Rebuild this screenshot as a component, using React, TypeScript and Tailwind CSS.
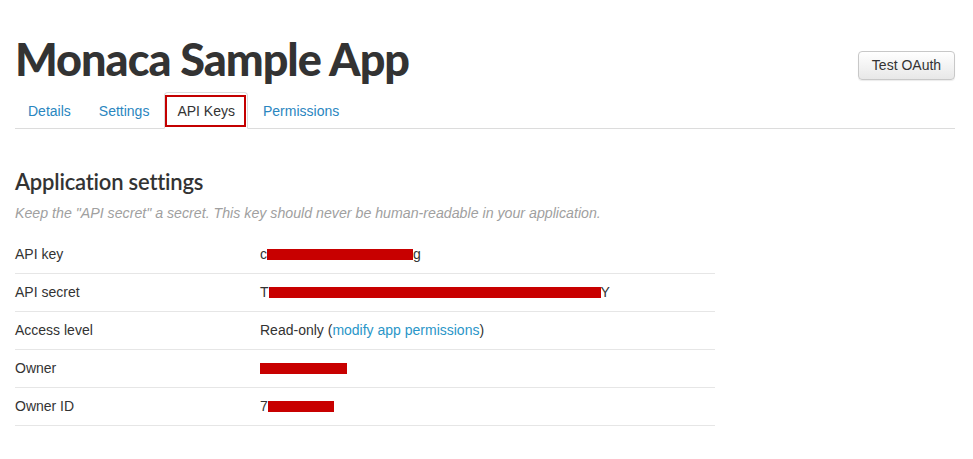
import React from "react";

const Bar = ({ w }: { w: number }) => (
  <span
    className="inline-block h-[11px] bg-[#c80000] align-middle"
    style={{ width: w }}
  />
);

export default function App() {
  const rows: { label: string; value: React.ReactNode }[] = [
    {
      label: "API key",
      value: (
        <span className="flex items-center">
          <span>c</span>
          <Bar w={146} />
          <span>g</span>
        </span>
      ),
    },
    {
      label: "API secret",
      value: (
        <span className="flex items-center">
          <span>T</span>
          <Bar w={332} />
          <span>Y</span>
        </span>
      ),
    },
    {
      label: "Access level",
      value: (
        <span>
          Read-only (<span className="text-[#2a96c8]">modify app permissions</span>)
        </span>
      ),
    },
    {
      label: "Owner",
      value: (
        <span className="flex items-center">
          <Bar w={87} />
        </span>
      ),
    },
    {
      label: "Owner ID",
      value: (
        <span className="flex items-center">
          <span>7</span>
          <Bar w={66} />
        </span>
      ),
    },
  ];

  return (
    <div
      className="w-[973px] h-[459px] bg-white text-[#333] overflow-hidden"
      style={{ fontFamily: '"Liberation Sans", Arial, sans-serif' }}
    >
      <div className="px-[15px] pr-[18px]">
        <div className="flex items-start justify-between pt-[31px]">
          <h1
            className="text-[45px] leading-[56px] font-black tracking-[-1px] text-[#333]"
            style={{ fontFamily: "Lato, sans-serif" }}
          >
            Monaca Sample App
          </h1>
          <button className="mt-[20px] h-[29px] w-[97px] rounded-[4px] border border-[#c8c8c8] bg-gradient-to-b from-white to-[#e8e8e8] text-[14px] text-[#333] shadow-[0_1px_1px_rgba(0,0,0,0.08)]">
            Test OAuth
          </button>
        </div>
        <div className="mt-[6px] flex h-[36px] items-end border-b border-[#dcdcdc] text-[14px]">
          {["Details", "Settings", "API Keys", "Permissions"].map((t) =>
            t === "API Keys" ? (
              <div
                key={t}
                className="relative -mb-px mr-[2px] h-[37px] rounded-t-[4px] border border-[#dcdcdc] border-b-white bg-white px-[12px] flex items-center"
              >
                <div className="absolute left-0 top-[2px] right-[1px] bottom-[1px] border-2 border-[#c40000]" />
                <span className="relative pt-[2px]">{t}</span>
              </div>
            ) : (
              <div
                key={t}
                className="-mb-px mr-[2px] h-[37px] flex items-center border border-transparent px-[12px] text-[#2a86c0]"
              >
                <span className="pt-[2px]">{t}</span>
              </div>
            )
          )}
        </div>
        <h2
          className="mt-[39px] text-[22px] leading-[28px] font-semibold text-[#333] tracking-[-0.2px]"
          style={{ fontFamily: "Lato, sans-serif" }}
        >
          Application settings
        </h2>
        <p className="mt-[7px] text-[14.2px] leading-[20px] italic text-[#a0a0a0]">
          Keep the "API secret" a secret. This key should never be human-readable in your application.
        </p>
        <div className="mt-[13px] w-[700px] text-[14px]">
          {rows.map((r) => (
            <div
              key={r.label}
              className="flex h-[38px] items-center border-b border-[#e6e6e6]"
            >
              <div className="w-[245px]">{r.label}</div>
              <div>{r.value}</div>
            </div>
          ))}
        </div>
      </div>
    </div>
  );
}
